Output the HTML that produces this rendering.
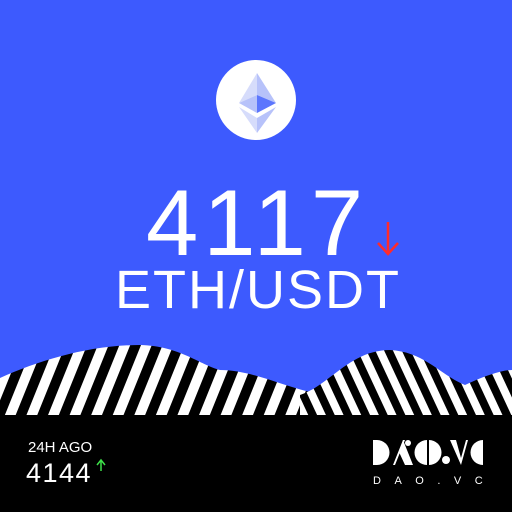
<!DOCTYPE html>
<html><head><style>
body{margin:0;width:512px;height:512px;overflow:hidden;background:#3d5afe;font-family:"Liberation Sans",sans-serif;position:relative}
.t{position:absolute;color:#fff;white-space:nowrap}
</style></head><body>
<svg width="512" height="512" style="position:absolute;left:0;top:0">
<defs>
<pattern id="st" width="20" height="20" patternUnits="userSpaceOnUse" patternTransform="rotate(22)">
<rect width="20" height="20" fill="#000"/><rect width="10" height="20" fill="#fff"/>
</pattern>
<pattern id="st2" width="16" height="16" patternUnits="userSpaceOnUse" patternTransform="rotate(-25)">
<rect width="16" height="16" fill="#000"/><rect width="8" height="16" fill="#fff"/>
</pattern>
</defs>
<circle cx="256" cy="100" r="40" fill="#fff"/>
<polygon points="257,73 239,103 257,95" fill="#d6dcfb"/>
<polygon points="257,73 276,103 257,95" fill="#b7c2fa"/>
<polygon points="239,103 257,95 257,113" fill="#b7c2fa"/>
<polygon points="276,103 257,95 257,113" fill="#5c76fd"/>
<polygon points="239,107 257,118 257,133" fill="#d6dcfb"/>
<polygon points="276,107 257,118 257,133" fill="#b7c2fa"/>
<path d="M0,378 C40,360 90,345 140,345 C180,346 200,365 220,370 C250,370 280,385 310,392 L310,415 L0,415Z" fill="url(#st)"/>
<path d="M300,395 C330,385 350,350 390,350 C425,352 440,375 465,385 C480,378 500,370 512,370 L512,415 L300,415Z" fill="url(#st2)"/>
<rect x="0" y="415" width="512" height="97" fill="#000"/>
<path d="M388,222 V253 M378,243 L388,254 L398,243" stroke="#ff2b2b" stroke-width="2.5" fill="none"/>
<path d="M101,471 V461 M97,465 L101,460 L105,465" stroke="#3ee04a" stroke-width="1.5" fill="none"/>
<g fill="#fff">
<path d="M373,440 h4 a12.5,12.5 0 0 1 0,25 h-4z"/>
<polygon points="393,465 403,440 405,440 395,465"/>
<polygon points="403,440 413,465 405,465 399,452"/>
<circle cx="408" cy="443" r="3"/>
<path d="M427,440 a12.5,12.5 0 0 0 0,25z"/>
<path d="M429,440 a12.5,12.5 0 0 1 0,25z"/>
<circle cx="446" cy="460" r="4"/>
<polygon points="450,440 456,440 461,458 466,440 468,440 461,465"/>
<path d="M483,440 a12.5,12.5 0 0 0 0,25z"/>
</g>
</svg>
<div class="t" style="left:146px;top:176px;font-size:94px;line-height:94px;letter-spacing:5px">4117</div>
<div class="t" style="left:115px;top:262px;font-size:54px;line-height:56px;letter-spacing:2px">ETH/USDT</div>
<div class="t" style="left:28px;top:439px;font-size:15px">24H AGO</div>
<div class="t" style="left:26px;top:458px;font-size:27px;letter-spacing:1.5px">4144</div>
<div class="t" style="left:373px;top:475px;font-size:11px;letter-spacing:13.5px">DAO.VC</div>
</body></html>
